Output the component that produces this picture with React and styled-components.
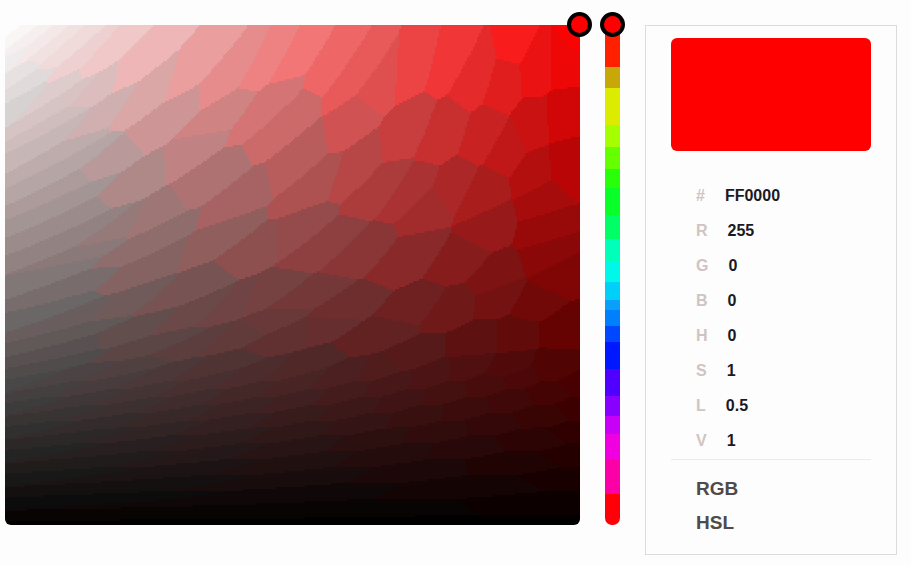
import React from 'react';
import styled, { createGlobalStyle } from 'styled-components';

const GlobalStyle = createGlobalStyle`
  * { box-sizing: border-box; }
  body {
    margin: 0;
    background: #fdfdfd;
    font-family: "Liberation Sans", Arial, sans-serif;
  }
`;

const FIELD_W = 575;
const FIELD_H = 500;
const CELL = 2;

// Red and green/blue levels of the pure-red field at a point.
const levelsAt = (x, y) => {
  const value = 255 * (1 - y / FIELD_H);
  return [value, value * (1 - x / FIELD_W)];
};

// Sample points of the field whose colours make up the reduced palette.
const SAMPLES = [
  [2, 2], [9, 10], [17, 17], [27, 22], [40, 26], [56, 27], [72, 34], [98, 28],
  [5, 33], [16, 46], [20, 58], [10, 80], [48, 64], [58, 76], [82, 68],
  [135, 33], [140, 70], [187, 40], [225, 48], [262, 34], [294, 26],
  [90, 94], [156, 98], [212, 92], [262, 82], [330, 32], [352, 45], [372, 62],
  [408, 38], [445, 30], [470, 52], [510, 14], [498, 58], [530, 41], [558, 35], [570, 3],
  [50, 80], [50, 94], [45, 112], [55, 127], [55, 143], [60, 160], [55, 178],
  [60, 195], [65, 212], [75, 228], [45, 247], [55, 265], [20, 290], [65, 294],
  [55, 310], [55, 325],
  [98, 138], [184, 124], [130, 156], [200, 156], [275, 100], [288, 138],
  [348, 93], [398, 108], [438, 108], [478, 108], [502, 124], [525, 101],
  [558, 90], [561, 137], [528, 148],
  [235, 173], [308, 160], [350, 142], [375, 162], [405, 166], [422, 182],
  [445, 162], [478, 168], [482, 202], [535, 175], [538, 202], [542, 229], [552, 250],
  [145, 190], [108, 205], [140, 218], [145, 240], [205, 215], [255, 222],
  [285, 207], [320, 222], [352, 228], [403, 232], [455, 235], [488, 252],
  [175, 265], [115, 280], [185, 290], [225, 280], [260, 268], [265, 295],
  [300, 270], [335, 285], [408, 282], [445, 282], [492, 272], [530, 278],
  [125, 305], [145, 320], [185, 320], [230, 310], [285, 310], [315, 300],
  [375, 308], [402, 332], [472, 315], [508, 308], [558, 302], [502, 343],
];

const buildPalette = () => {
  const palette = SAMPLES.map(([x, y]) => levelsAt(x, y));
  // Shadows are banded more finely than the mid-tones.
  for (let low = 0, column = 0; low < 80; low += 4, column += 1) {
    for (let value = low + (column % 3) * 4; value < 84; value += 12) {
      palette.push([value, low]);
    }
  }
  return palette;
};

// Green and blue share one level, so it counts for more than red.
const nearest = (palette, [red, low]) => {
  let best = 0;
  let bestDistance = Infinity;
  palette.forEach(([r, l], index) => {
    const dr = r - red;
    const dl = l - low;
    const distance = (0.4 * dr + 1.6 * dl) ** 2 + 0.6 * (dr - dl) ** 2;
    if (distance < bestDistance) {
      bestDistance = distance;
      best = index;
    }
  });
  return best;
};

const buildFacets = () => {
  const palette = buildPalette();
  const paths = palette.map(() => '');
  for (let y = 0; y < FIELD_H; y += CELL) {
    let start = 0;
    let current = nearest(palette, levelsAt(0, y));
    for (let x = CELL; x < FIELD_W + CELL; x += CELL) {
      const next = x < FIELD_W ? nearest(palette, levelsAt(x, y)) : -1;
      if (next !== current) {
        paths[current] += `M${start} ${y}H${Math.min(x, FIELD_W)}v${CELL}H${start}z`;
        start = x;
        current = next;
      }
    }
  }
  return paths
    .map((d, i) => {
      const red = Math.round(palette[i][0]);
      const low = Math.round(palette[i][1]);
      return { d, fill: `rgb(${red}, ${low}, ${low})` };
    })
    .filter(({ d }) => d);
};

const FACETS = buildFacets();

const HUES = [
  ['#ff2000', 42], ['#c8a808', 21], ['#dcec00', 37], ['#a6ff00', 22],
  ['#66ff00', 22], ['#28ff08', 19], ['#08ff28', 27], ['#00ff66', 24],
  ['#00ffb8', 22], ['#00f8e8', 21], ['#00d0f8', 18], ['#08a0f8', 10],
  ['#0080ff', 16], ['#0048ff', 16], ['#0018ff', 27], ['#5000ff', 27],
  ['#8800ff', 20], ['#c800f8', 18], ['#f000e0', 25], ['#fc00a8', 35],
  ['#ff0008', 31],
];

const VALUES = [
  ['#', 'FF0000'], ['R', '255'], ['G', '0'], ['B', '0'],
  ['H', '0'], ['S', '1'], ['L', '0.5'], ['V', '1'],
];

const Picker = styled.main`
  display: grid;
  grid-template-columns: minmax(0, 1fr) 15px 252px;
  align-items: start;
  gap: 25px;
  padding: 25px 14px 10px 5px;
`;

const Field = styled.div`
  position: relative;
`;

const FieldDrawing = styled.svg`
  display: block;
  width: 100%;
  height: 500px;
  border-radius: 6px;
`;

const Strip = styled.div`
  position: relative;
  height: 500px;
`;

const HueBands = styled.div`
  display: flex;
  flex-direction: column;
  height: 100%;
  border-radius: 7px;
  overflow: hidden;
`;

const HueBand = styled.div`
  flex: ${({ $share }) => $share} 0 0;
  background: ${({ $color }) => $color};
`;

const Handle = styled.span`
  position: absolute;
  top: -13px;
  right: ${({ $right }) => $right};
  width: 25px;
  height: 25px;
  border: 4px solid #000;
  border-radius: 50%;
  background: #f00;
  pointer-events: none;
`;

const HueInput = styled.input`
  position: absolute;
  inset: 0;
  width: 100%;
  height: 100%;
  margin: 0;
  opacity: 0;
  writing-mode: vertical-lr;
  cursor: pointer;
`;

const Panel = styled.section`
  padding: 12px 25px 14px;
  border: 1px solid #dcdcdc;
`;

const Swatch = styled.div`
  height: 113px;
  border-radius: 6px;
  background: #f00;
`;

const ValueList = styled.dl`
  margin: 27px 0 0;
  padding: 0 25px;
`;

const ValueRow = styled.div`
  display: flex;
  align-items: center;
  gap: 20px;
  height: 35px;
  font-size: 16px;
  font-weight: 700;
`;

const ValueName = styled.dt`
  color: #cfc4c3;
`;

const ValueText = styled.dd`
  margin: 0;
  color: #1a1a22;
`;

const Formats = styled.div`
  display: flex;
  flex-direction: column;
  margin-top: 1px;
  padding: 12px 25px 0;
  border-top: 1px solid #ebebeb;
`;

const FormatButton = styled.button`
  height: 34px;
  padding: 0;
  border: 0;
  background: none;
  color: #504a48;
  font: 700 19px "Liberation Sans", Arial, sans-serif;
  text-align: left;
  cursor: pointer;
`;

export default function App() {
  return (
    <>
      <GlobalStyle />
      <Picker>
        <Field>
          <FieldDrawing
            viewBox={`0 0 ${FIELD_W} ${FIELD_H}`}
            preserveAspectRatio="none"
            shapeRendering="crispEdges"
            aria-hidden="true"
          >
            {FACETS.map(({ d, fill }, index) => (
              <path key={index} d={d} fill={fill} />
            ))}
          </FieldDrawing>
          <Handle $right="-12px" />
        </Field>
        <Strip>
          <HueBands>
            {HUES.map(([color, share]) => (
              <HueBand key={color} $color={color} $share={share} />
            ))}
          </HueBands>
          <HueInput type="range" min="0" max="360" defaultValue="0" aria-label="Hue" />
          <Handle $right="-5px" />
        </Strip>
        <Panel>
          <Swatch />
          <ValueList>
            {VALUES.map(([name, value]) => (
              <ValueRow key={name}>
                <ValueName>{name}</ValueName>
                <ValueText>{value}</ValueText>
              </ValueRow>
            ))}
          </ValueList>
          <Formats>
            <FormatButton type="button">RGB</FormatButton>
            <FormatButton type="button">HSL</FormatButton>
          </Formats>
        </Panel>
      </Picker>
    </>
  );
}
